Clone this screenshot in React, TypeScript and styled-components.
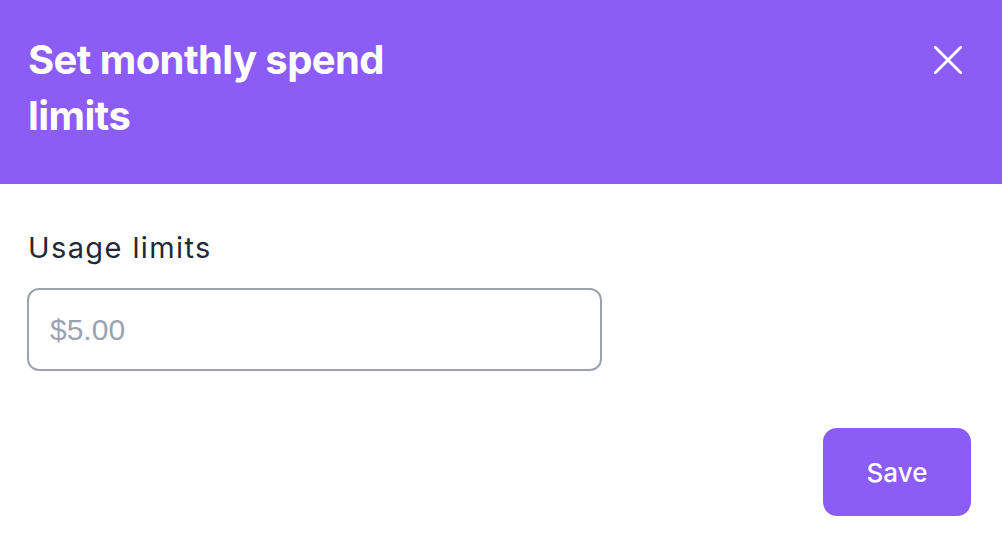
import React from "react";
import styled, { createGlobalStyle } from "styled-components";

const Global = createGlobalStyle`
  html, body { margin: 0; padding: 0; background: #ffffff; }
  body { font-family: "Inter", "Liberation Sans", sans-serif; }
  * { box-sizing: border-box; }
`;

const Dialog = styled.div`
  width: 1002px;
  height: 538px;
  display: flex;
  flex-direction: column;
  background: #ffffff;
`;

const Header = styled.header`
  height: 184px;
  flex: none;
  background: #8b5cf6;
  display: flex;
  justify-content: space-between;
  align-items: flex-start;
  padding: 32px 28px 0 28px;
`;

const Title = styled.h2`
  margin: 0;
  max-width: 420px;
  color: #ffffff;
  font-family: "Inter", "Liberation Sans", sans-serif;
  font-weight: 700;
  font-size: 40px;
  line-height: 56px;
  letter-spacing: -0.6px;
`;

const CloseButton = styled.button`
  width: 40px;
  height: 40px;
  margin-top: 8px;
  margin-right: 6px;
  padding: 0;
  border: none;
  background: transparent;
  display: flex;
  align-items: center;
  justify-content: center;
  cursor: pointer;
`;

const Body = styled.div`
  flex: 1;
  display: flex;
  flex-direction: column;
  padding: 44px 31px 22px 27px;
`;

const Label = styled.label`
  padding-left: 1px;
  color: #1f2937;
  font-family: "Inter", "Liberation Sans", sans-serif;
  font-size: 29px;
  font-weight: 400;
  line-height: 40px;
  letter-spacing: 1.4px;
`;

const Input = styled.input`
  margin-top: 20px;
  width: 575px;
  height: 83px;
  border: 2px solid #9ca3af;
  border-radius: 12px;
  padding: 0 21px;
  font-family: "Liberation Sans", Arial, sans-serif;
  font-size: 30px;
  color: #111827;
  outline: none;
  &::placeholder { color: #9ca3af; }
`;

const Footer = styled.div`
  margin-top: auto;
  display: flex;
  justify-content: flex-end;
`;

const SaveButton = styled.button`
  width: 148px;
  height: 88px;
  border: none;
  border-radius: 14px;
  background: #8b5cf6;
  color: #ffffff;
  font-family: "Inter", "Liberation Sans", sans-serif;
  font-size: 26px;
  font-weight: 500;
  cursor: pointer;
`;

export default function App() {
  return (
    <>
      <Global />
      <Dialog>
        <Header>
          <Title>Set monthly spend limits</Title>
          <CloseButton aria-label="Close">
            <svg width="28" height="28" viewBox="0 0 28 28" fill="none">
              <path d="M1.5 1.5L26.5 26.5M26.5 1.5L1.5 26.5" stroke="#ffffff" strokeWidth="3" strokeLinecap="round" />
            </svg>
          </CloseButton>
        </Header>
        <Body>
          <Label htmlFor="limit">Usage limits</Label>
          <Input id="limit" placeholder="$5.00" />
          <Footer>
            <SaveButton>Save</SaveButton>
          </Footer>
        </Body>
      </Dialog>
    </>
  );
}
